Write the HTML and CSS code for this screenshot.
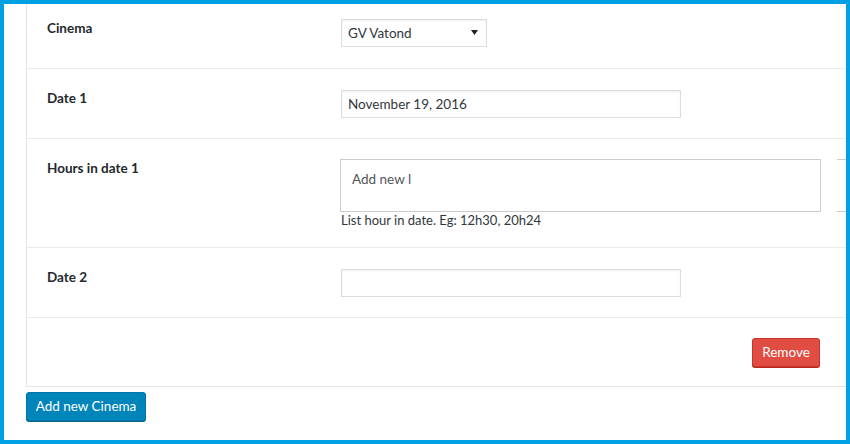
FILE: index.html
```html
<!DOCTYPE html>
<html>
<head>
<meta charset="utf-8">
<link rel="stylesheet" href="styles.css">
</head>
<body>
<div class="frame">
  <div class="card">
    <div class="row">
      <div class="label">Cinema</div>
      <div class="field">
        <div class="select">GV Vatond
          <svg class="caret" width="7" height="5" viewBox="0 0 7 5"><path d="M0 0H7L3.5 5Z" fill="#222"/></svg>
        </div>
      </div>
    </div>
    <div class="row">
      <div class="label">Date 1</div>
      <div class="field">
        <div class="input">November 19, 2016</div>
      </div>
    </div>
    <div class="row">
      <div class="label">Hours in date 1</div>
      <div class="field">
        <div class="tags"><span class="tag-input">Add new l</span></div>
        <p class="help">List hour in date. Eg: 12h30, 20h24</p>
      </div>
      <div class="ghost"></div>
    </div>
    <div class="row">
      <div class="label">Date 2</div>
      <div class="field">
        <div class="input"></div>
      </div>
    </div>
    <div class="row row-actions">
      <div class="label"></div>
      <div class="field field-end">
        <button class="btn btn-remove">Remove</button>
      </div>
    </div>
  </div>
  <button class="btn btn-primary">Add new Cinema</button>
</div>
</body>
</html>
```

FILE: styles.css
```css
html, body {
  margin: 0;
  padding: 0;
  background: #fff;
}
body {
  font-family: "Lato", "Open Sans", sans-serif;
  font-size: 13px;
  color: #23282d;
}
.frame {
  box-sizing: border-box;
  width: 850px;
  height: 444px;
  border: 4px solid #00a0e2;
  padding-left: 22px;
  overflow: hidden;
  background: #fff;
}
.card {
  width: 900px;
  margin-top: -5px;
  border: 1px solid #e5e5e5;
  border-top: none;
  background: #fff;
}
.row {
  display: flex;
  align-items: flex-start;
  padding: 21px 0 20px 20px;
  border-bottom: 1px solid #eaeaea;
}
.row-actions {
  border-bottom: none;
  padding-top: 20px;
  padding-bottom: 19px;
}
.label {
  width: 294px;
  flex: none;
  font-weight: 700;
  font-size: 13.5px;
  line-height: 17px;
}
.field {
  width: 480px;
  flex: none;
}
.field-end {
  display: flex;
  justify-content: flex-end;
}
.select {
  box-sizing: border-box;
  width: 146px;
  height: 28px;
  margin: -1px 0 1px;
  border: 1px solid #ddd;
  box-shadow: inset 0 1px 2px rgba(0,0,0,0.07);
  padding: 0 8px 0 6px;
  display: flex;
  align-items: center;
  justify-content: space-between;
  color: #32373c;
  font-size: 13.5px;
}
.caret {
  display: block;
  margin-top: -1px;
}
.input {
  box-sizing: border-box;
  width: 340px;
  height: 28px;
  border: 1px solid #ddd;
  box-shadow: inset 0 1px 2px rgba(0,0,0,0.07);
  padding: 0 6px;
  display: flex;
  align-items: center;
  color: #32373c;
  font-size: 13.5px;
}
.tags {
  box-sizing: border-box;
  width: 481px;
  height: 53px;
  margin: -1px 0 0 -1px;
  border: 1px solid #ccc;
  padding: 10px 11px;
  line-height: 18px;
}
.tag-input {
  color: #555;
  font-size: 13.5px;
}
.help {
  margin: 1px 0 0;
  line-height: 15px;
  height: 14px;
  color: #32373c;
}
.ghost {
  margin: -1px 0 0 16px;
  width: 60px;
  height: 51px;
  border-top: 1px solid #ccc;
  border-bottom: 1px solid #ccc;
}
.btn {
  font-family: inherit;
  font-size: 13.5px;
  line-height: 1;
  border-radius: 3px;
  cursor: pointer;
  color: #fff;
  box-sizing: border-box;
}
.btn-remove {
  width: 68px;
  height: 29px;
  margin-right: 1px;
  background: #e14d43;
  border: 1px solid #c8342a;
  box-shadow: 0 1px 0 #ba281e;
  padding: 0;
}
.btn-primary {
  display: block;
  margin-top: 5px;
  width: 120px;
  height: 29px;
  background: #0085ba;
  border: 1px solid #0073aa;
  box-shadow: 0 1px 0 #006799;
  padding: 0;
}
```
